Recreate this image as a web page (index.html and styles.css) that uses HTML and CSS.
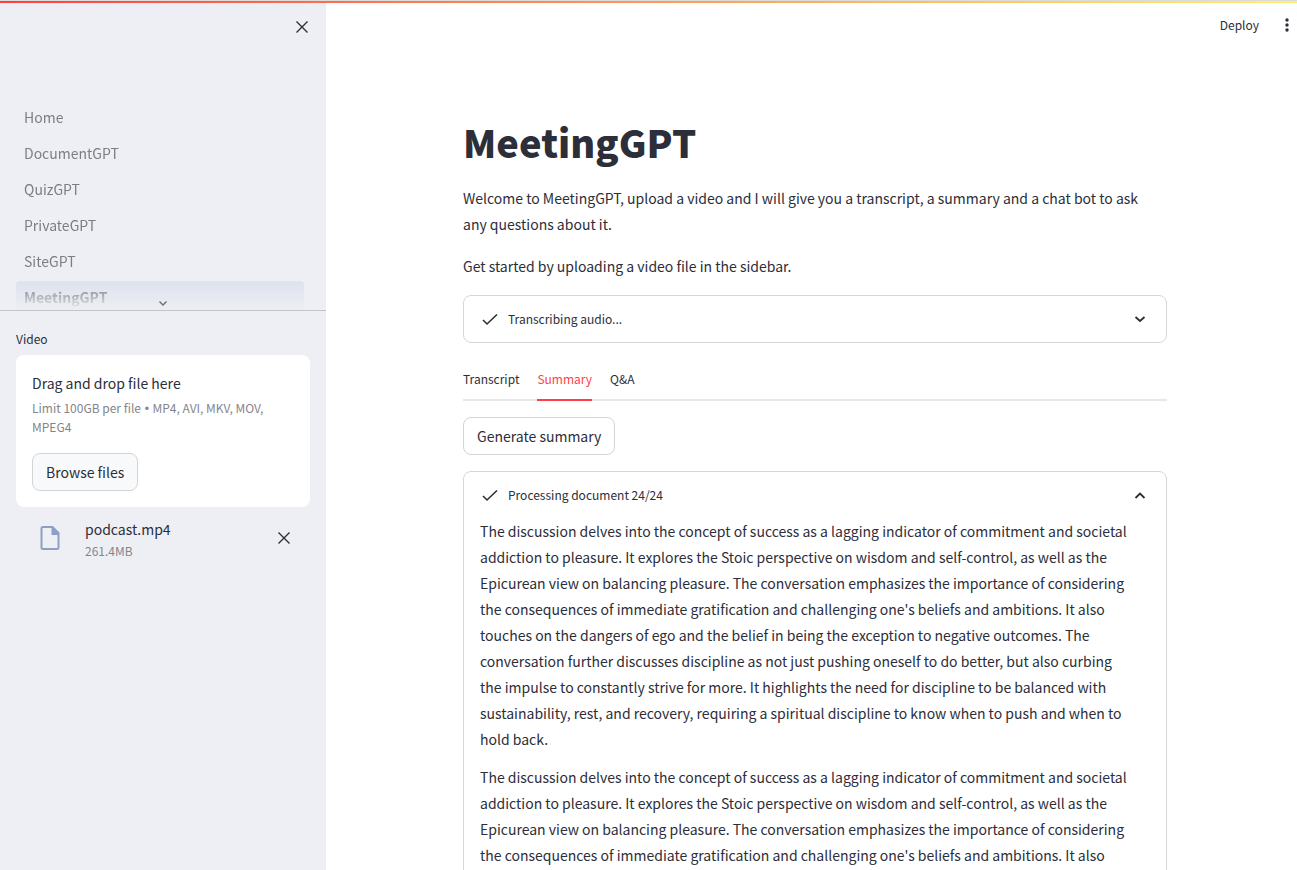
FILE: index.html
```html
<!DOCTYPE html>
<html lang="en">
<head>
  <meta charset="utf-8">
  <meta name="viewport" content="width=device-width, initial-scale=1">
  <title>MeetingGPT</title>
  <link rel="stylesheet" href="styles.css">
</head>
<body>
  <div class="decoration"></div>
  <div class="app">
    <aside class="sidebar">
      <div class="sidebar-top">
        <button class="icon-button" type="button" aria-label="Close sidebar">
          <svg width="20" height="20" viewBox="0 0 20 20"><path d="M4.500 4.500l11 11M15.500 4.500l-11 11" fill="none" stroke="currentColor" stroke-width="1.400"/></svg>
        </button>
      </div>
      <nav class="nav">
        <div class="nav-list">
          <a class="nav-link" href="#">Home</a>
          <a class="nav-link" href="#">DocumentGPT</a>
          <a class="nav-link" href="#">QuizGPT</a>
          <a class="nav-link" href="#">PrivateGPT</a>
          <a class="nav-link" href="#">SiteGPT</a>
          <a class="nav-link nav-link-active" href="#">MeetingGPT</a>
        </div>
        <button class="nav-more" type="button" aria-label="Show more pages">
          <svg width="10" height="8" viewBox="0 0 10 8"><path d="M1.500 2.500L5 6 8.500 2.500" fill="none" stroke="currentColor" stroke-width="1.400"/></svg>
        </button>
      </nav>
      <section class="upload">
        <label class="upload-label" for="browse">Video</label>
        <div class="dropzone">
          <div class="dropzone-title">Drag and drop file here</div>
          <div class="dropzone-hint">Limit 100GB per file <span class="bullet">•</span> MP4, AVI, MKV, MOV, MPEG4</div>
          <button class="button button-tinted" id="browse" type="button">Browse files</button>
        </div>
        <div class="file">
          <svg class="file-icon" width="20" height="26" viewBox="0 0 20 26"><path d="M3 2h9.500l6 6v14.500a1.500 1.500 0 0 1-1.500 1.500H3a1.500 1.500 0 0 1-1.500-1.500v-19A1.500 1.500 0 0 1 3 2z" fill="none" stroke="currentColor" stroke-width="2"/><path d="M11.500 1.500V10h8z" fill="currentColor"/></svg>
          <div class="file-info">
            <div class="file-name">podcast.mp4</div>
            <div class="file-size">261.4MB</div>
          </div>
          <button class="icon-button" type="button" aria-label="Remove file">
            <svg width="20" height="20" viewBox="0 0 20 20"><path d="M4.500 4.500l11 11M15.500 4.500l-11 11" fill="none" stroke="currentColor" stroke-width="1.400"/></svg>
          </button>
        </div>
      </section>
    </aside>

    <main class="main">
      <header class="toolbar">
        <button class="deploy" type="button">Deploy</button>
        <button class="menu" type="button" aria-label="Menu">
          <svg width="6" height="16" viewBox="0 0 6 16"><g fill="currentColor"><circle cx="3" cy="3" r="1.700"/><circle cx="3" cy="8" r="1.700"/><circle cx="3" cy="13" r="1.700"/></g></svg>
        </button>
      </header>
      <div class="content">
        <h1 class="title">MeetingGPT</h1>
        <p class="text intro">Welcome to MeetingGPT, upload a video and I will give you a transcript, a summary and a chat bot to ask any questions about it.</p>
        <p class="text intro">Get started by uploading a video file in the sidebar.</p>

        <details class="status">
          <summary class="status-head">
            <svg width="16" height="16" viewBox="0 0 16 16"><path d="M1 9l4 4L15 3.500" fill="none" stroke="currentColor" stroke-width="1.600"/></svg>
            <span class="status-label">Transcribing audio...</span>
            <svg class="chevron" width="12" height="8" viewBox="0 0 12 8"><path d="M1.500 2L6 6l4.500-4" fill="none" stroke="currentColor" stroke-width="1.800"/></svg>
          </summary>
        </details>

        <div class="tabs" role="tablist">
          <button class="tab" type="button" role="tab">Transcript</button>
          <button class="tab tab-active" type="button" role="tab" aria-selected="true">Summary</button>
          <button class="tab" type="button" role="tab">Q&amp;A</button>
        </div>

        <button class="button" type="button">Generate summary</button>

        <details class="status" open>
          <summary class="status-head">
            <svg width="16" height="16" viewBox="0 0 16 16"><path d="M1 9l4 4L15 3.500" fill="none" stroke="currentColor" stroke-width="1.600"/></svg>
            <span class="status-label">Processing document 24/24</span>
            <svg class="chevron" width="12" height="8" viewBox="0 0 12 8"><path d="M1.500 7L6 2.500 10.500 7" fill="none" stroke="currentColor" stroke-width="1.800"/></svg>
          </summary>
          <div class="status-body">
            <p class="text">The discussion delves into the concept of success as a lagging indicator of commitment and societal addiction to pleasure. It explores the Stoic perspective on wisdom and self-control, as well as the Epicurean view on balancing pleasure. The conversation emphasizes the importance of considering the consequences of immediate gratification and challenging one's beliefs and ambitions. It also touches on the dangers of ego and the belief in being the exception to negative outcomes. The conversation further discusses discipline as not just pushing oneself to do better, but also curbing the impulse to constantly strive for more. It highlights the need for discipline to be balanced with sustainability, rest, and recovery, requiring a spiritual discipline to know when to push and when to hold back.</p>
            <p class="text">The discussion delves into the concept of success as a lagging indicator of commitment and societal addiction to pleasure. It explores the Stoic perspective on wisdom and self-control, as well as the Epicurean view on balancing pleasure. The conversation emphasizes the importance of considering the consequences of immediate gratification and challenging one's beliefs and ambitions. It also</p>
          </div>
        </details>
      </div>
    </main>
  </div>
</body>
</html>
```
FILE: styles.css
```css
* {
  box-sizing: border-box;
}

body {
  margin: 0;
  color: #2c2e39;
  background: #fff;
  font-family: "Noto Sans CJK SC", "Noto Sans", sans-serif;
  font-size: 14px;
  line-height: 26px;
}

button {
  padding: 0;
  border: 0;
  background: none;
  color: inherit;
  font: inherit;
  cursor: pointer;
}

svg {
  display: block;
  flex: none;
}

.decoration {
  position: fixed;
  z-index: 2;
  top: 0;
  left: 0;
  right: 0;
  height: 3px;
  border-top: 1px solid #dcdcdc;
  background: linear-gradient(90deg, #ff4040, #fff070);
}

.app {
  display: grid;
  grid-template-columns: 326px 1fr;
  height: 100vh;
}

/* Sidebar */

.sidebar {
  overflow: hidden;
  background: #eeeff4;
}

.sidebar-top {
  display: flex;
  justify-content: flex-end;
  height: 99px;
  padding: 17px 14px;
}

.icon-button {
  width: 20px;
  height: 20px;
}

.nav {
  position: relative;
  border-bottom: 1px solid #c3c4cb;
}

.nav-list {
  display: flex;
  flex-direction: column;
  gap: 4px;
  height: 211px;
  padding: 2px 22px 0 16px;
  overflow: hidden;
  -webkit-mask-image: linear-gradient(#000 88%, transparent);
  mask-image: linear-gradient(#000 88%, transparent);
}

.nav-link {
  flex: none;
  padding: 0 8px;
  border-radius: 4px;
  color: #7c7e86;
  line-height: 32px;
  text-decoration: none;
}

.nav-link-active {
  background: #dfe3ed;
  font-weight: 700;
}

.nav-more {
  position: absolute;
  bottom: 3px;
  left: 50%;
  margin-left: -5px;
  color: #6b6d76;
}

.upload {
  padding: 16px;
}

.upload-label {
  display: block;
  padding-bottom: 4px;
  font-size: 12px;
  line-height: 24px;
}

.dropzone {
  padding: 16px;
  border-radius: 8px;
  background: #fff;
}

.dropzone-title {
  line-height: 24px;
}

.dropzone-hint {
  margin: 4px 0 18px;
  color: #84858c;
  font-size: 12px;
  line-height: 17px;
}

.bullet {
  padding: 0 1px;
  font-family: "Liberation Sans", sans-serif;
}

.button {
  align-self: flex-start;
  height: 38px;
  padding: 0 13px;
  border: 1px solid #d3d4d8;
  border-radius: 8px;
  background: #fff;
}

.button-tinted {
  background: #f8f9fb;
}

.file {
  display: flex;
  align-items: center;
  padding: 9px 16px 0 24px;
}

.file-icon {
  color: #8f9fc4;
}

.file-info {
  flex: 1;
  padding-left: 25px;
}

.file-size {
  color: #84858c;
  font-size: 12px;
  line-height: 18px;
}

/* Main column */

.main {
  padding-left: 7px;
  overflow-y: auto;
  scrollbar-width: none;
}

.toolbar {
  display: flex;
  justify-content: flex-end;
  align-items: center;
  gap: 25px;
  height: 50px;
  padding-right: 7px;
  font-size: 12px;
}

.content {
  display: flex;
  flex-direction: column;
  gap: 16px;
  max-width: 736px;
  margin: 0 auto;
  padding: 66px 16px 0;
}

.title {
  margin: 0;
  padding-bottom: 1px;
  font-size: 38px;
  font-weight: 900;
  line-height: 52px;
}

.text {
  margin: 0;
}

.intro {
  padding-right: 16px;
}

.status {
  border: 1px solid #d5d6da;
  border-radius: 8px;
}

.status-head {
  display: flex;
  align-items: center;
  gap: 10px;
  height: 46px;
  padding: 0 20px 0 18px;
  font-size: 12px;
  list-style: none;
  cursor: pointer;
}

.status-label {
  flex: 1;
}

.status-body {
  display: flex;
  flex-direction: column;
  gap: 12px;
  padding: 0 32px 16px 16px;
}

.tabs {
  display: flex;
  gap: 18px;
  height: 42px;
  box-shadow: inset 0 -2px #e8e8ea;
}

.tab {
  border-bottom: 2px solid transparent;
  font-size: 12px;
}

.tab-active {
  border-color: #ff4046;
  color: #ff4046;
}
```
